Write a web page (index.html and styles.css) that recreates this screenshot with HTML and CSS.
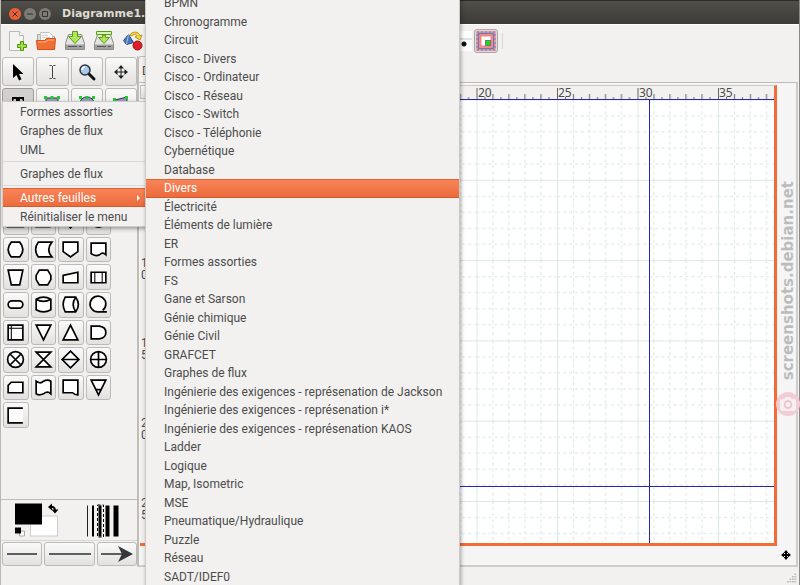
FILE: index.html
```html
<!DOCTYPE html>
<html lang="fr">
<head>
<meta charset="utf-8">
<title>Diagramme1.dia</title>
<link rel="stylesheet" href="styles.css">
</head>
<body>
<div class="window">
  <header class="titlebar">
    <button class="wm close" aria-label="Fermer"><svg viewBox="0 0 12 12"><path d="M3.5 3.5l5 5m0-5l-5 5"/></svg></button>
    <button class="wm" aria-label="Réduire"><svg viewBox="0 0 12 12"><path d="M3 6h6"/></svg></button>
    <button class="wm" aria-label="Agrandir"><svg viewBox="0 0 12 12"><path d="M3.5 3.5h5v5h-5z"/></svg></button>
    <h1>Diagramme1.dia</h1>
  </header>

  <div class="toolbar">
    <button class="flat" aria-label="Nouveau"><svg viewBox="0 0 22 22"><path d="M3.500 1.500h10l4 4v15h-14z" fill="#f4f4f2" stroke="#b9bab6"/><path d="M13.500 1.500v4h4" fill="#fff" stroke="#b9bab6"/><path d="M12.500 11.500h3v3h3v3h-3v3h-3v-3h-3v-3h3z" transform="translate(2 0)" fill="#a4dc4c" stroke="#4e9a06"/></svg></button>
    <button class="flat" aria-label="Ouvrir"><svg viewBox="0 0 22 22"><path d="M2.500 18.500v-14h6l2 2h9v12z" fill="#dcdcd8" stroke="#a8a8a4"/><path d="M5.500 2.500h9l3 3v8h-12z" fill="#fafafa" stroke="#c2c2be"/><path d="M7 5.500h6M7 7.500h8" stroke="#d5d5d0"/><path d="M1.500 10.500h8l2-2h9l-1 11h-17z" fill="#f07033" stroke="#d0501b"/><path d="M3 12h8l2-2h6" stroke="#ffb088" fill="none"/></svg></button>
    <button class="flat" aria-label="Enregistrer"><svg viewBox="0 0 22 22"><path d="M4.500 4.500h13l3 9v6h-19v-6z" fill="#e4e4e2" stroke="#8c8c88"/><path d="M2 14.500h18v4.500H2z" fill="#a0a09e"/><path d="M4 16.500h9M15 16.500h3" stroke="#555"/><path d="M8.500 1.500h5v5h4l-6.500 7-6.500-7h4z" fill="#b4e45c" stroke="#56a010"/></svg></button>
    <button class="flat" aria-label="Enregistrer sous"><svg viewBox="0 0 22 22"><path d="M4.500 4.500h13l3 9v6h-19v-6z" fill="#e4e4e2" stroke="#8c8c88"/><path d="M2 14.500h18v4.500H2z" fill="#a0a09e"/><path d="M4 16.500h9M15 16.500h3" stroke="#555"/><path d="M3.500 1.500h15v3h-15z" fill="#dcf3b4" stroke="#56a010"/><path d="M9.500 5.500h3v2h4l-5.500 6-5.500-6h4z" fill="#b4e45c" stroke="#56a010"/></svg></button>
    <button class="flat" aria-label="Exporter"><svg viewBox="0 0 22 22"><path d="M6.500 4.500l-5 6 3 4 7-2z" fill="#4d78b8" stroke="#204a87"/><path d="M6.500 4.500l-2 10" stroke="#a4c0e6"/><path d="M8 5c2-4 9-4 10 1l2-1-2 5-5-3 2-1c-1-2-4-2-5 0z" fill="#f4d648" stroke="#b99611"/><circle cx="15.500" cy="15.500" r="4.500" fill="#da1f26" stroke="#a80f15"/></svg></button>
    <span class="grow"></span>
    <span class="zoom-dot"></span>
    <button class="snap" aria-label="Magnétisme"><svg viewBox="0 0 20 20"><rect x="2" y="2" width="16" height="16" fill="#fff" stroke="#f3a09e" stroke-width="4"/><rect x="1" y="1" width="18" height="18" fill="none" stroke="#6677dd" stroke-dasharray="2 2"/><rect x="2.500" y="2.500" width="15" height="15" fill="none" stroke="#7777aa" stroke-width="1.500"/><rect x="4.500" y="4.500" width="11" height="11" fill="#fff" stroke="#f08784" stroke-width="2"/><rect x="9" y="9" width="6" height="6" fill="#777"/><rect x="10" y="10" width="4" height="4" fill="#15dd24"/></svg></button>
    <span class="separator"></span>
  </div>

  <main class="workspace">
    <aside class="toolbox">
      <div class="tools">
        <button aria-label="Modifier"><svg viewBox="0 0 20 20"><path d="M5 2v14l3.500-3 2.500 5.500 2.500-1.200-2.500-5.300h4.500z"/></svg></button>
        <button aria-label="Texte"><svg viewBox="0 0 20 20"><path d="M7.500 3.500h2l1 1 1-1h2M10.500 4v12M7.500 16.500h2l1-1 1 1h2" fill="none" stroke="#444"/></svg></button>
        <button aria-label="Zoom"><svg viewBox="0 0 20 20"><path d="M11 11l6 6" stroke="#111" stroke-width="3" stroke-linecap="round"/><circle cx="8" cy="8" r="5" fill="#a9c9ec" stroke="#334" stroke-width="1.500"/><path d="M5 8a3 3 0 0 1 3-3" fill="none" stroke="#fff" stroke-width="1.500"/></svg></button>
        <button aria-label="Défiler"><svg viewBox="0 0 20 20"><path d="M10 4v12M4 10h12" stroke="#222"/><path d="M10 3l3 3.500H7zM10 17l3-3.500H7zM3 10l3.500-3v6zM17 10l-3.500-3v6z" fill="#222"/></svg></button>
        <button class="active" aria-label="Zone de texte"><svg viewBox="0 0 20 20"><path d="M4 4h12v4h-1l-1-2h-2v10h2v1H6v-1h2V6H6L5 8H4z"/></svg></button>
        <button aria-label="Boîte"><svg viewBox="0 0 20 20"><path d="M4 5h12v11H4z" fill="#99c" stroke="#333"/><path d="M2 3h3v3H2zM8.500 3h3v3h-3zM15 3h3v3h-3z" fill="#18d22a"/></svg></button>
        <button aria-label="Ellipse"><svg viewBox="0 0 20 20"><ellipse cx="10" cy="10" rx="7" ry="6" fill="#99c" stroke="#333"/><path d="M2 3h3v3H2zM8.500 3h3v3h-3zM15 3h3v3h-3z" fill="#18d22a"/></svg></button>
        <button aria-label="Polygone"><svg viewBox="0 0 20 20"><path d="M4 7l12-3v11H3z" fill="#99c" stroke="#333"/><path d="M2 5h3v3H2zM14 3h3v3h-3z" fill="#18d22a"/></svg></button>
      </div>
      <div class="shapes">
        <button aria-label="Processus"><svg viewBox="0 0 20 20"><path d="M2.500 5h15v10h-15z"/></svg></button>
        <button aria-label="Données"><svg viewBox="0 0 20 20"><path d="M3 5h13v10H3z"/></svg></button>
        <button aria-label="Décision"><svg viewBox="0 0 20 20"><path d="M10 4l6 6-6 6-6-6z"/></svg></button>
        <button aria-label="Connecteur"><svg viewBox="0 0 20 20"><circle cx="10" cy="9.500" r="6"/></svg></button>

        <button aria-label="Affichage"><svg viewBox="0 0 20 20"><path d="M6 3h8q6 7 0 14H6q-6-7 0-14z"/></svg></button>
        <button aria-label="Données stockées"><svg viewBox="0 0 20 20"><path d="M5 3h13q-6 7 0 14H5q-5-7 0-14z"/></svg></button>
        <button aria-label="Renvoi de page"><svg viewBox="0 0 20 20"><path d="M3 3h14v9l-7 5-7-5z"/></svg></button>
        <button aria-label="Document"><svg viewBox="0 0 20 20"><path d="M3 4h14v11q-3-3-6 0-4 2-8-1z"/></svg></button>

        <button aria-label="Opération manuelle"><svg viewBox="0 0 20 20"><path d="M3 3h14l-3 14H6z"/></svg></button>
        <button aria-label="Préparation"><svg viewBox="0 0 20 20"><path d="M6 3h8l3 5v4l-3 5H6l-3-5V8z"/></svg></button>
        <button aria-label="Saisie manuelle"><svg viewBox="0 0 20 20"><path d="M3 8l14-3v10H3z"/></svg></button>
        <button aria-label="Processus prédéfini"><svg viewBox="0 0 20 20"><path d="M3 5h14v10H3z"/><path d="M6.500 5v10M13.500 5v10" stroke-width="1"/></svg></button>

        <button aria-label="Terminaison"><svg viewBox="0 0 20 20"><rect x="3" y="6.500" width="14" height="7" rx="3.500"/></svg></button>
        <button aria-label="Disque magnétique"><svg viewBox="0 0 20 20"><path d="M3 5q7-4 14 0v10q-7 4-14 0zM3 5q7 4 14 0"/></svg></button>
        <button aria-label="Tambour magnétique"><svg viewBox="0 0 20 20"><path d="M5 3h10q5 7 0 14H5q-4-7 0-14zM15 3q-5 7 0 14"/></svg></button>
        <button aria-label="Bande magnétique"><svg viewBox="0 0 20 20"><path d="M10 17h8M10 17a7.500 7.500 0 1 1 4-1.500"/></svg></button>

        <button aria-label="Stockage interne"><svg viewBox="0 0 20 20"><path d="M3 3h14v14H3z"/><path d="M6 3v14M3 6h14" stroke-width="1"/></svg></button>
        <button aria-label="Fusion"><svg viewBox="0 0 20 20"><path d="M3 3h14l-7 14z"/></svg></button>
        <button aria-label="Extraction"><svg viewBox="0 0 20 20"><path d="M10 3l7 14H3z"/></svg></button>
        <button aria-label="Délai"><svg viewBox="0 0 20 20"><path d="M3 4h8q6 1 6 6t-6 6H3z"/></svg></button>

        <button aria-label="Jonction"><svg viewBox="0 0 20 20"><circle cx="10" cy="10" r="7.500"/><path d="M5 5l10 10m0-10l-10 10"/></svg></button>
        <button aria-label="Assembler"><svg viewBox="0 0 20 20"><path d="M3 3h14L3 17h14z"/></svg></button>
        <button aria-label="Trier"><svg viewBox="0 0 20 20"><path d="M10 2l8 8-8 8-8-8zM2 10h16"/></svg></button>
        <button aria-label="Ou"><svg viewBox="0 0 20 20"><circle cx="10" cy="10" r="7.500"/><path d="M10 2v16M2 10h16"/></svg></button>

        <button aria-label="Carte perforée"><svg viewBox="0 0 20 20"><path d="M6 5h11v10H3V8z"/></svg></button>
        <button aria-label="Bande perforée"><svg viewBox="0 0 20 20"><path d="M3 4q4 3 7 0 4-2 7 0v12q-3-3-7 0-4 2-7 0z"/></svg></button>
        <button aria-label="Fichier de transmission"><svg viewBox="0 0 20 20"><path d="M3 3h14v14q-3 0-5-2H3z"/></svg></button>
        <button aria-label="Stockage hors ligne"><svg viewBox="0 0 20 20"><path d="M3 3h14l-7 14zM7.500 12h5"/></svg></button>

        <button aria-label="Transmission"><svg viewBox="0 0 20 20"><path d="M17 3H3v14h14"/></svg></button>
      </div>
      <div class="style-area">
        <svg class="colours" viewBox="0 0 46 36"><rect x="15.500" y="12.500" width="27" height="20" fill="#fff" stroke="#ccc"/><rect width="27" height="21"/><path d="M4.500 27.500h5v5h-5z" fill="#fff" stroke="#aaa"/><path d="M0 24h6v6H0z"/><path d="M35 3.500q5-1 5 4" fill="none" stroke="#000" stroke-width="2"/><path d="M37 0v7l-4-3.500zM36.500 6h7L40 10z"/></svg>
        <svg class="widths" viewBox="0 0 34 36"><path d="M1.500 2v31" stroke="#222"/><path d="M7 2v31" stroke="#000" stroke-width="2"/><path d="M14 2v31" stroke="#000" stroke-width="3"/><path d="M21.500 2v31" stroke="#000" stroke-width="4"/><path d="M30 2v31" stroke="#000" stroke-width="5"/><rect x="11.500" y="1.500" width="6" height="32" fill="none" stroke="#000" stroke-dasharray="3 2"/></svg>
      </div>
      <div class="line-styles">
        <button aria-label="Flèche de début"><svg viewBox="0 0 32 16"><path d="M1 8h30" stroke="#2d3033" stroke-width="1.500"/></svg></button>
        <button class="wide" aria-label="Style de ligne"><svg viewBox="0 0 44 16"><path d="M1 8h42" stroke="#2d3033" stroke-width="1.500"/></svg></button>
        <button aria-label="Flèche de fin"><svg viewBox="0 0 32 16"><path d="M0 8h22" stroke="#2d3033" stroke-width="1.500"/><path d="M17 0l15 8-15 8 4-8z" fill="#34383b"/></svg></button>
      </div>
    </aside>

    <section class="document">
      <div class="tab">Diagramme1.dia</div>
      <div class="page">
        <button class="corner" aria-label="Règles"></button>
        <div class="ruler-h">
          <svg>
            <defs><pattern id="ticks" x="-2.500" width="80.500" height="14" patternUnits="userSpaceOnUse">
              <path d="M.5 2v11M16.500 8v5M32.500 8v5M48.500 8v5M64.500 8v5M8.500 11v2M24.500 11v2M40.500 11v2M56.500 11v2M72.500 11v2" stroke="#666"/>
            </pattern></defs>
            <rect width="100%" height="14" fill="url(#ticks)"/>
            <text x="321" y="11">20</text><text x="401" y="11">25</text><text x="482" y="11">30</text><text x="562" y="11">35</text>
          </svg>
        </div>
        <div class="ruler-v"><span>1<br>0</span><span>1<br>5</span><span>2<br>0</span><span>2<br>5</span></div>
        <div class="canvas">
          <svg>
            <defs><pattern id="grid" x="-2.500" y="0.500" width="80.500" height="80.300" patternUnits="userSpaceOnUse">
              <path d="M16.500 0v80M32.500 0v80M48.500 0v80M64.500 0v80M0 16.500h80M0 32.500h80M0 48.500h80M0 64.500h80" stroke="#d6e5e1" stroke-dasharray="3 3"/>
              <path d="M.5 0v81M0 .5h81" stroke="#dae8e5"/>
            </pattern></defs>
            <rect width="100%" height="100%" fill="url(#grid)"/>
            <path d="M0 387.500h2000M492.500 0v2000M0 .5h2000" stroke="#2926ac"/>
          </svg>
        </div>
        <button class="navigate" aria-label="Naviguer"><svg viewBox="0 0 10 10"><path d="M5 1v8M1 5h8" stroke="#000" stroke-width="2"/><path d="M5 0l2.500 3h-5zM5 10l2.500-3h-5zM0 5l3-2.500v5zM10 5L7 2.500v5z"/></svg></button>
      </div>
    </section>
  </main>

  <footer class="status"><svg viewBox="0 0 12 12"><path d="M9 1.500h2M6 4.500h2m1 0h2M3 7.500h2m1 0h2m1 0h2M0 10.500h2m1 0h2m1 0h2m1 0h2" stroke="#bbb8b4" stroke-width="2"/></svg></footer>
</div>

<ul class="menu sheets">
  <li><a href="#">Formes assorties</a></li>
  <li><a href="#">Graphes de flux</a></li>
  <li><a href="#">UML</a></li>
  <li class="rule"></li>
  <li><a href="#">Graphes de flux</a></li>
  <li class="rule"></li>
  <li><a href="#" class="selected">Autres feuilles<span class="arrow"></span></a></li>
  <li><a href="#">Réinitialiser le menu</a></li>
</ul>

<ul class="menu submenu">
  <li><a href="#">BPMN</a></li>
  <li><a href="#">Chronogramme</a></li>
  <li><a href="#">Circuit</a></li>
  <li><a href="#">Cisco - Divers</a></li>
  <li><a href="#">Cisco - Ordinateur</a></li>
  <li><a href="#">Cisco - Réseau</a></li>
  <li><a href="#">Cisco - Switch</a></li>
  <li><a href="#">Cisco - Téléphonie</a></li>
  <li><a href="#">Cybernétique</a></li>
  <li><a href="#">Database</a></li>
  <li><a href="#" class="selected">Divers</a></li>
  <li><a href="#">Électricité</a></li>
  <li><a href="#">Éléments de lumière</a></li>
  <li><a href="#">ER</a></li>
  <li><a href="#">Formes assorties</a></li>
  <li><a href="#">FS</a></li>
  <li><a href="#">Gane et Sarson</a></li>
  <li><a href="#">Génie chimique</a></li>
  <li><a href="#">Génie Civil</a></li>
  <li><a href="#">GRAFCET</a></li>
  <li><a href="#">Graphes de flux</a></li>
  <li><a href="#">Ingénierie des exigences - représenation de Jackson</a></li>
  <li><a href="#">Ingénierie des exigences - représenation i*</a></li>
  <li><a href="#">Ingénierie des exigences - représenation KAOS</a></li>
  <li><a href="#">Ladder</a></li>
  <li><a href="#">Logique</a></li>
  <li><a href="#">Map, Isometric</a></li>
  <li><a href="#">MSE</a></li>
  <li><a href="#">Pneumatique/Hydraulique</a></li>
  <li><a href="#">Puzzle</a></li>
  <li><a href="#">Réseau</a></li>
  <li><a href="#">SADT/IDEF0</a></li>
</ul>

<div class="watermark">
  <svg viewBox="0 0 24 24"><circle cx="12" cy="12" r="12" fill="#f3ccd5"/><path d="M6 7h2l2-2h4l2 2h2q2 0 2 2v7q0 3-3 3H7q-3 0-3-3V9q0-2 2-2z" fill="#f6f0f1"/><circle cx="12" cy="12.500" r="3.500" fill="none" stroke="#efb9c6" stroke-width="1.500"/></svg>
  <span>screenshots.debian.net</span>
</div>
</body>
</html>
```
FILE: styles.css
```css
* { box-sizing: border-box; }

body {
  margin: 0;
  height: 100vh;
  overflow: hidden;
  position: relative;
  background: #8b8986;
  color: #4c4c4c;
  font: 12px/18px Roboto, "Noto Sans", sans-serif;
}

button {
  display: flex;
  align-items: center;
  justify-content: center;
  padding: 0;
  border: 1px solid #bdbab6;
  border-radius: 3px;
  background: linear-gradient(#fafafa, #e2e1df);
}

svg { display: block; }

ul { margin: 0; padding: 0; list-style: none; }

.window {
  height: 100%;
  display: flex;
  flex-direction: column;
  margin-right: 1px;
  border-left: 1px solid #bbb8b4;
  background: #f2f1f0;
}

.titlebar {
  flex: none;
  height: 24px;
  display: flex;
  align-items: center;
  gap: 3px;
  padding: 2px 8px 0;
  border-top: 1px solid #2d2c29;
  background: linear-gradient(#504f4a, #3c3b37);
}

.titlebar h1 {
  margin: 0 0 0 8px;
  color: #dfdbd2;
  font: bold 11px/16px "DejaVu Sans", sans-serif;
}

.wm {
  width: 12px;
  height: 12px;
  border: 0;
  border-radius: 50%;
  background: #7d7b74;
}

.wm svg { width: 12px; fill: none; stroke: #33322f; }
.wm.close { background: #ee6033; }

.toolbar {
  flex: none;
  height: 32px;
  display: flex;
  align-items: center;
  gap: 7px;
  padding: 0 5px;
  border-top: 1px solid #fff;
}

.flat { border: 0; background: none; }
.flat svg { width: 22px; height: 22px; }
.grow { flex: 0 0 294px; }

.zoom-dot {
  width: 20px;
  height: 20px;
  background: radial-gradient(circle at 12px 13px, #111 2px, transparent 3px), linear-gradient(#fff 7px, #d8e6e3 7px, #d8e6e3 9px, #fff 9px);
}

.snap { width: 24px; height: 24px; margin-left: -5px; background: #dedcda; border-color: #aaa7a4; }
.snap svg { width: 20px; }
.separator { width: 1px; height: 16px; background: #d9d7d5; margin-left: -3px; }

.workspace { flex: 1; min-height: 0; display: flex; }

.toolbox {
  flex: 0 0 137px;
  display: flex;
  flex-direction: column;
  border-right: 1px solid #bfbcb9;
}

.tools {
  display: grid;
  grid-template-columns: repeat(4, 1fr);
  grid-auto-rows: 29px;
  gap: 2px;
  padding: 1px 0 0 1px;
}

.tools svg { width: 20px; height: 20px; }
.tools .active { background: #d2d0ce; border-color: #9c9996; }

.shapes {
  width: 108px;
  height: 219px;
  display: grid;
  grid-template: repeat(8, 1fr) / repeat(4, 1fr);
  gap: 2px;
  margin: 92px 0 auto 2px;
}

.shapes svg { flex: none; width: 21px; fill: #fff; stroke: #000; stroke-width: 1.6px; }

.style-area {
  height: 41px;
  display: flex;
  justify-content: space-between;
  padding: 3px 17px 0 14px;
  border-top: 1px solid #bfbcb9;
}

.colours { width: 46px; }
.widths { width: 34px; }

.line-styles {
  height: 27px;
  display: flex;
  gap: 2px;
  padding: 1px 0 1px 1px;
  border-top: 1px solid #d9d7d5;
}

.line-styles button { flex: 4; min-width: 0; }
.line-styles .wide { flex: 5; }
.line-styles svg { height: 16px; }

.document {
  flex: 1;
  min-width: 0;
  display: flex;
  flex-direction: column;
  margin-right: 1px;
}

.tab {
  width: 110px;
  height: 26px;
  padding: 5px 3px;
  border: 1px solid #bfbcb9;
  border-bottom: 0;
  border-radius: 3px 3px 0 0;
}

.page {
  flex: 1;
  min-height: 0;
  position: relative;
  display: grid;
  grid-template: 14px 1fr / 17px 1fr;
  padding: 2px 19px 19px 1px;
  border: 1px solid #bfbcb9;
  border-right: 2px solid #d0ccc8;
  border-bottom: 2px solid #d0ccc8;
  background: #f5f5f5;
}

.corner { border-radius: 0; }

.ruler-h {
  min-width: 0;
  border-top: 1px solid #d0ccc8;
  border-right: 3px solid #f36c38;
  background: #f2f1f0;
}

.ruler-h svg { width: 100%; height: 13px; }
.ruler-h text { font: 12px "Noto Sans", sans-serif; fill: #4c4c4c; }

.ruler-v {
  display: flex;
  flex-direction: column;
  justify-content: flex-end;
  gap: 56px;
  padding: 0 1px 22px;
  border-bottom: 3px solid #f36c38;
  background: #f2f1f0;
  line-height: 12px;
}

.canvas {
  min-width: 0;
  min-height: 0;
  overflow: hidden;
  border-right: 3px solid #f36c38;
  border-bottom: 3px solid #f36c38;
  background: #fff;
}

.canvas svg { width: 100%; height: 100%; }

.navigate {
  position: absolute;
  right: 5px;
  bottom: 5px;
  border: 0;
  background: none;
}

.navigate svg { width: 10px; }

.status {
  flex: none;
  height: 18px;
  display: flex;
  align-items: flex-end;
  justify-content: flex-end;
  padding: 2px;
}

.status svg { width: 10px; }

.menu {
  position: absolute;
  border: 1px solid #cecac6;
  background: #f2f1f0;
  box-shadow: 1px 2px 4px rgba(0, 0, 0, .35);
}

.menu a {
  height: 100%;
  display: flex;
  align-items: center;
  padding: 0 17px;
  color: #4c4c4c;
  text-decoration: none;
  white-space: nowrap;
}

.menu .selected {
  color: #fff;
  background: linear-gradient(#f9855a, #ea6a3a);
  box-shadow: inset 0 1px #e0622f, inset 0 -1px #d9592a;
}

.sheets { top: 101px; left: 2px; width: 146px; }
.sheets li { height: 19px; }
.sheets .rule { height: 5px; padding-top: 2px; }
.sheets .rule::before { content: ""; display: block; height: 1px; background: #dcdad8; }

.arrow {
  margin-left: auto;
  margin-right: -13px;
  border: 3px solid transparent;
  border-left-color: #fff;
}

.submenu {
  top: -6px;
  bottom: -1px;
  left: 145px;
  width: 315px;
  display: grid;
  grid-template-columns: minmax(0, 1fr);
  grid-auto-rows: 1fr;
  border-width: 0 1px;
}

.submenu a { padding: 0 18px; }

.watermark {
  position: absolute;
  top: 181px;
  right: 0;
  display: flex;
  flex-direction: column-reverse;
  align-items: center;
  gap: 12px;
  color: rgba(150, 150, 150, .6);
  font: bold 15px/20px "DejaVu Sans", sans-serif;
}

.watermark span { writing-mode: vertical-rl; transform: rotate(180deg); }
.watermark svg { width: 24px; }
```
